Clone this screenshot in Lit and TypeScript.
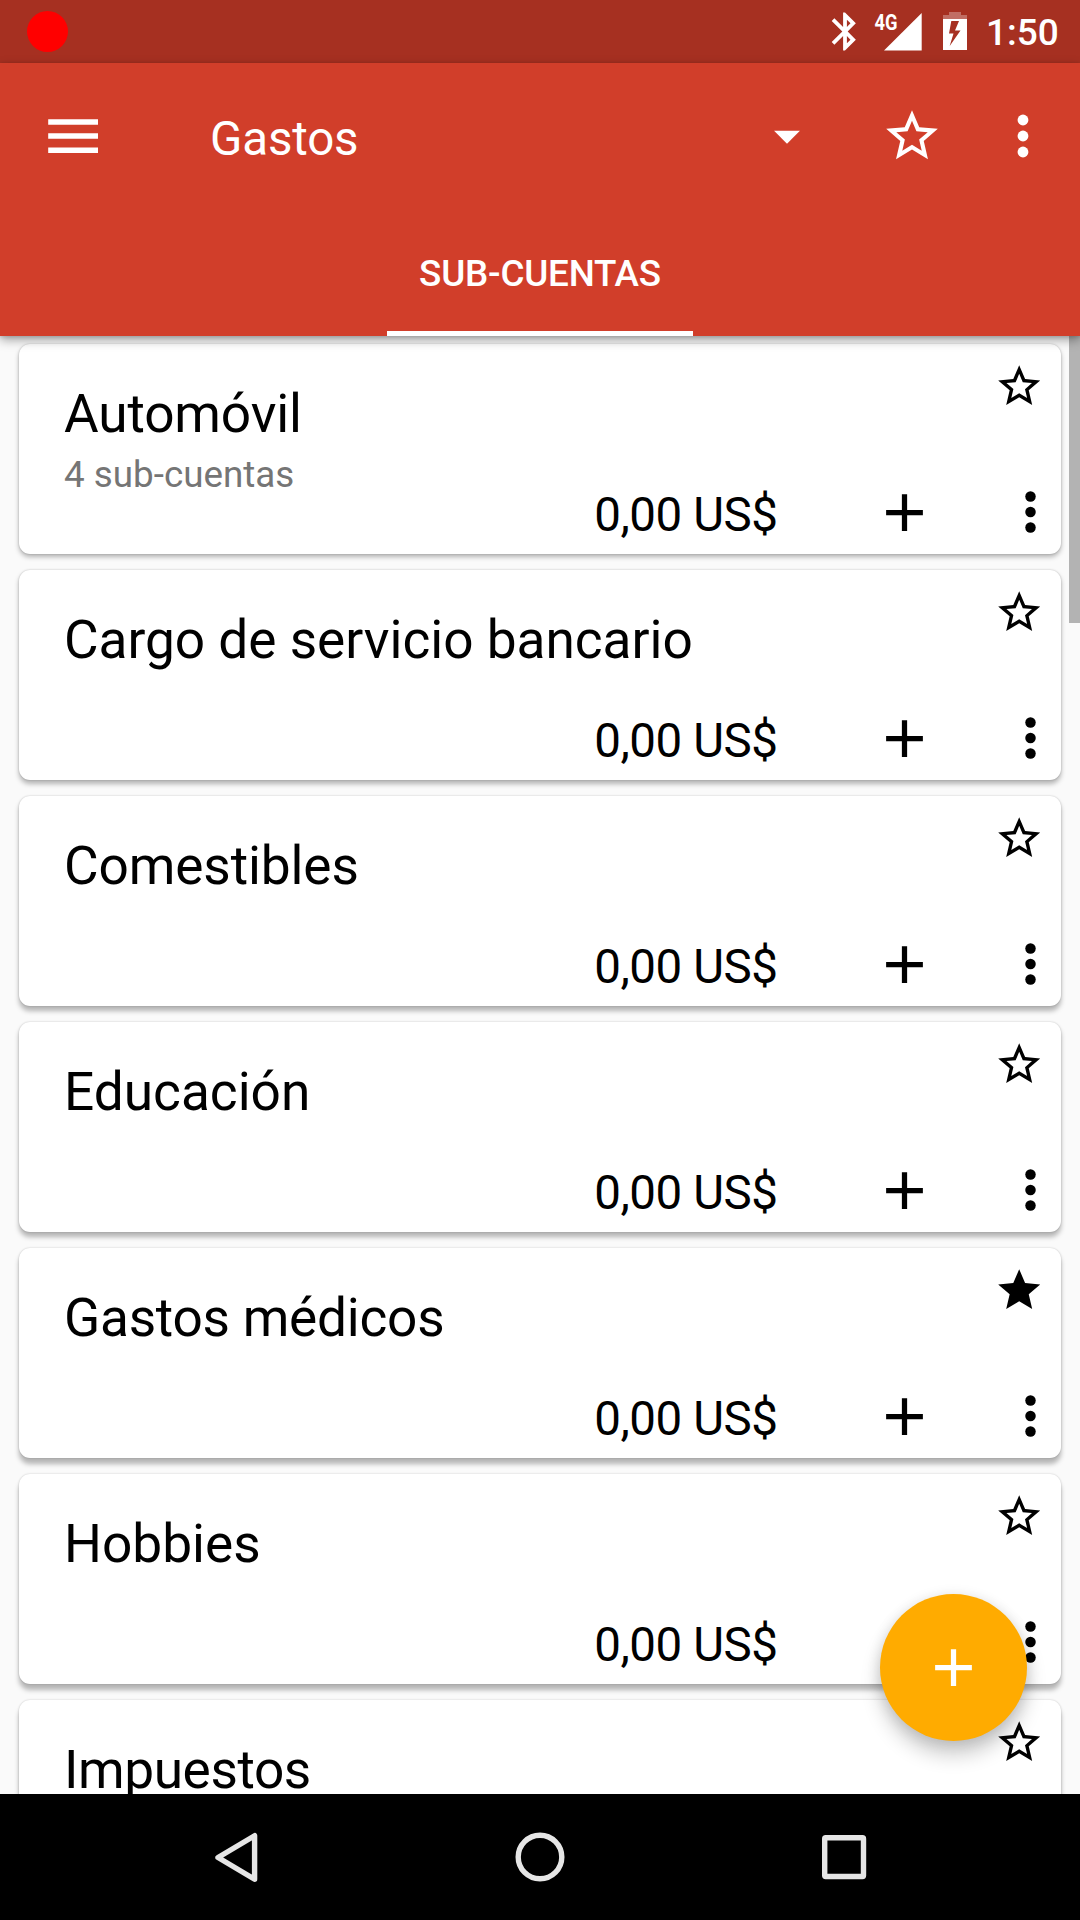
import { LitElement, html, css, svg } from "lit";
import { customElement, property } from "lit/decorators.js";
import { styleMap } from "lit/directives/style-map.js";

const STAR_OUTER = "M22 9.24l-7.19-.62L12 2 9.19 8.63 2 9.24l5.46 4.73L5.82 21 12 17.27 18.18 21l-1.63-7.03z";
const STAR_HOLE = "M12 15.4l-3.76 2.27 1-4.28-3.32-2.88 4.38-.38L12 6.1l1.71 4.04 4.38.38-3.32 2.88 1 4.28z";
const starOutline = svg`<path fill-rule="evenodd" d="${STAR_OUTER}${STAR_HOLE}"/>`;
const starFilled = svg`<path d="${STAR_OUTER}"/>`;
const plus = svg`<path d="M19 13h-6v6h-2v-6H5v-2h6V5h2v6h6z"/>`;
const dots = svg`<circle cx="12" cy="6" r="2.03"/><circle cx="12" cy="12" r="2.03"/><circle cx="12" cy="18" r="2.03"/>`;

interface Account {
  name: string;
  detail?: string;
  favorite?: boolean;
  tracking: number;
}

const ACCOUNTS: Account[] = [
  { name: "Automóvil", detail: "4 sub-cuentas", tracking: -0.15 },
  { name: "Cargo de servicio bancario", tracking: -0.02 },
  { name: "Comestibles", tracking: -0.12 },
  { name: "Educación", tracking: 0 },
  { name: "Gastos médicos", favorite: true, tracking: -0.25 },
  { name: "Hobbies", tracking: 0 },
  { name: "Impuestos", tracking: -0.42 },
];

@customElement("account-card")
class AccountCard extends LitElement {
  @property({ attribute: false }) account!: Account;

  static styles = css`
    :host {
      display: flex;
      flex-direction: column;
      justify-content: space-between;
      flex: none;
      height: 210px;
      box-sizing: border-box;
      border-radius: 11px;
      background: #fff;
      color: #000;
      box-shadow: 0 var(--drop, 3px) 5px rgba(0, 0, 0, 0.28), 0 0 2px rgba(0, 0, 0, 0.22);
    }
    .top { display: flex; justify-content: space-between; padding: 17px 17px 0 45px; }
    .text { display: flex; flex-direction: column; padding-top: 22px; }
    .name { font-size: 53.2px; line-height: 62px; white-space: nowrap; }
    .detail { font-size: 36.8px; line-height: 44px; color: #757575; margin-top: 8px; }
    .bottom { display: flex; align-items: center; justify-content: flex-end; height: 62px; padding-bottom: 11px; margin-top: -62px; }
    .amount { font-size: 47.5px; line-height: 56px; letter-spacing: -0.45px; margin-right: 95px; padding-top: 5px; white-space: nowrap; }
    svg { display: block; fill: currentColor; }
    .star { width: 50.4px; height: 50.4px; }
    .add { width: 63px; height: 63px; margin-right: 63px; }
    .more { width: 63px; height: 62px; margin-right: -0.5px; }
  `;

  render() {
    const a = this.account;
    return html`
      <div class="top">
        <div class="text">
          <div class="name" style=${styleMap({ letterSpacing: `${a.tracking}px` })}>${a.name}</div>
          ${a.detail ? html`<div class="detail">${a.detail}</div>` : null}
        </div>
        <svg class="star" viewBox="0 0 24 24">${a.favorite ? starFilled : starOutline}</svg>
      </div>
      <div class="bottom">
        <div class="amount">0,00 US$</div>
        <svg class="add" viewBox="0 0 24 24">${plus}</svg>
        <svg class="more" viewBox="0 0 24 24">${dots}</svg>
      </div>
    `;
  }
}

@customElement("app-root")
class AppRoot extends LitElement {
  static styles = css`
    :host {
      display: flex;
      flex-direction: column;
      position: relative;
      width: 1080px;
      height: 1920px;
      overflow: hidden;
      background: #fafafa;
      font-family: Roboto, "Noto Sans", sans-serif;
    }
    svg { display: block; flex: none; fill: currentColor; }
    .status {
      display: flex;
      align-items: center;
      flex: none;
      height: 63px;
      box-sizing: border-box;
      padding: 0 23px 0 27px;
      background: #a63021;
      color: #fff;
    }
    .rec { width: 41px; height: 41px; border-radius: 50%; background: #f00; margin-right: auto; }
    .indicators { width: 148px; height: 63px; }
    .tech { font: 700 22px Roboto, sans-serif; }
    .clock { font-size: 37px; line-height: 44px; font-weight: 500; margin-left: 11px; padding-top: 2px; width: 71px; white-space: nowrap; }
    .header {
      flex: none;
      height: 273px;
      display: flex;
      flex-direction: column;
      background: #d13e2a;
      color: #fff;
      z-index: 1;
      box-shadow: 0 4px 10px rgba(0, 0, 0, 0.35), 0 1px 4px rgba(0, 0, 0, 0.15);
    }
    .toolbar { display: flex; align-items: center; height: 146px; padding: 0 25.5px 0 42px; }
    .menu { width: 62px; height: 62px; }
    .title { font-size: 47.5px; line-height: 56px; letter-spacing: -0.15px; margin-left: 106px; padding-top: 6px; flex: 1; }
    .caret { width: 62px; height: 62px; margin-right: 63px; }
    .fav { width: 62px; height: 62px; margin-right: 48px; }
    .more { width: 64px; height: 64px; }
    .tab {
      display: flex;
      align-items: center;
      justify-content: center;
      align-self: center;
      width: 306px;
      height: 127px;
      box-sizing: border-box;
      padding-top: 6px;
      border-bottom: 5px solid #fff;
      font-size: 36.8px;
      font-weight: 500;
      letter-spacing: -0.2px;
      white-space: nowrap;
    }
    .list {
      flex: 1;
      min-height: 0;
      overflow: hidden;
      display: flex;
      flex-direction: column;
      gap: 16px;
      padding: 8px 19px 0;
    }
    .nav { flex: none; height: 126px; display: flex; background: #000; color: #e6e6e6; }
    .nav svg { width: 1080px; height: 126px; fill: none; stroke: currentColor; stroke-width: 5.4; stroke-linejoin: round; }
    .scroll { position: absolute; right: 0; top: 336px; width: 11px; height: 287px; background: #b3b3b3; }
    .fab {
      position: absolute;
      left: 880px;
      top: 1594px;
      width: 147px;
      height: 147px;
      display: flex;
      align-items: center;
      justify-content: center;
      border-radius: 50%;
      background: #ffab00;
      color: #fff;
      box-shadow: 0 14px 20px rgba(0, 0, 0, 0.2), 0 2px 14px rgba(0, 0, 0, 0.12);
    }
    .fab svg { width: 63px; height: 63px; }
  `;

  render() {
    return html`
      <div class="status">
        <div class="rec"></div>
        <svg class="indicators" viewBox="827 0 148 63">
          <path transform="translate(822.2 8.7) scale(1.9)" d="M17.71 7.71L12 2h-1v7.59L6.41 5 5 6.41 10.59 12 5 17.59 6.41 19 11 14.41V22h1l5.71-5.71-4.3-4.29zM13 5.83l1.88 1.88L13 9.59zm1.88 10.46L13 18.17v-3.76z"/>
          <text class="tech" x="874.5" y="29.7" textLength="23" lengthAdjust="spacingAndGlyphs">4G</text>
          <path d="M884 50.5L921.7 13v37.5z"/>
          <path fill-opacity=".3" d="M943 19v-4h6v-3h12v3h6v4z"/>
          <path fill-rule="evenodd" d="M943 19h24v31h-24zM951.3 21l-2.3 12.5h4.5l-3.800 12.500L960.500 30.500h-5.500l4-9.500z"/>
        </svg>
        <div class="clock">1:50</div>
      </div>
      <div class="header">
        <div class="toolbar">
          <svg class="menu" viewBox="0 0 62 62"><path d="M6.200 14.200h49.800v5.600H6.200zM6.200 28.200h49.800v5.600H6.200zM6.200 42.400h49.800v5.600H6.200z"/></svg>
          <div class="title">Gastos</div>
          <svg class="caret" viewBox="0 0 24 24"><path d="M7 10l5 5 5-5z"/></svg>
          <svg class="fav" viewBox="0 0 24 24">${starOutline}</svg>
          <svg class="more" viewBox="0 0 24 24">${dots}</svg>
        </div>
        <div class="tab">SUB-CUENTAS</div>
      </div>
      <div class="list">
        ${ACCOUNTS.map(
          (a, i) => html`<account-card .account=${a} style=${styleMap({ "--drop": `${3 + i * 0.6}px` })}></account-card>`,
        )}
      </div>
      <div class="nav">
        <svg viewBox="0 0 1080 126">
          <path d="M254.600 41.700v43.600L218 63.500z"/>
          <circle cx="540" cy="63" r="21.800"/>
          <rect x="824.700" y="43.700" width="38.800" height="38.800" rx="1"/>
        </svg>
      </div>
      <div class="scroll"></div>
      <div class="fab"><svg viewBox="0 0 24 24">${plus}</svg></div>
    `;
  }
}
